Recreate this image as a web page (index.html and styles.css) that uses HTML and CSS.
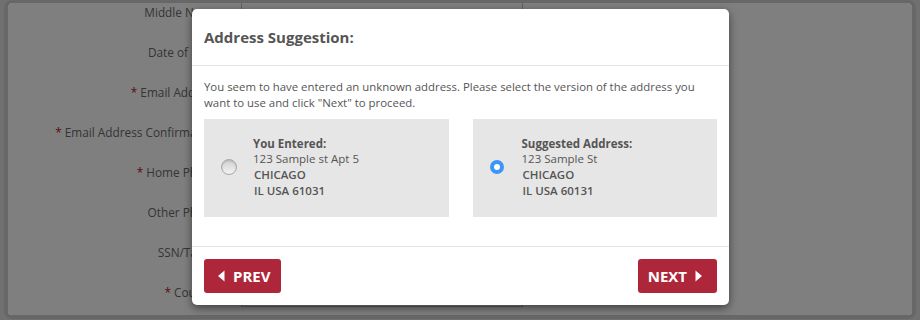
FILE: index.html
```html
<!DOCTYPE html>
<html>
<head>
<meta name="viewport" content="width=device-width, initial-scale=1.0">
  <title>Address Suggestion</title>
  <link rel="stylesheet" href="styles.css">
</head>
<body>
  <div class="frame">
    <form class="bg-form">
      <div class="row"><label class="lbl">Middle Name</label><span class="field"></span></div>
      <div class="row"><label class="lbl">Date of Birth</label><span class="field"></span></div>
      <div class="row"><label class="lbl"><i class="req">*</i> Email Address</label><span class="field"></span></div>
      <div class="row"><label class="lbl"><i class="req">*</i> Email Address Confirmation</label><span class="field"></span></div>
      <div class="row"><label class="lbl"><i class="req">*</i> Home Phone</label><span class="field"></span></div>
      <div class="row"><label class="lbl">Other Phone</label><span class="field"></span></div>
      <div class="row"><label class="lbl">SSN/Tax ID</label><span class="field"></span></div>
      <div class="row"><label class="lbl"><i class="req">*</i> Country</label><span class="field"></span></div>
    </form>
    <div class="overlay"></div>
  </div>

  <div class="modal">
    <div class="modal-header">
      <h4 class="modal-title">Address Suggestion:</h4>
    </div>
    <div class="modal-body">
      <p class="intro">You seem to have entered an unknown address. Please select the version of the address you want to use and click "Next" to proceed.</p>
      <div class="choices">
        <label class="choice">
          <span class="radio-slot"><span class="radio"></span></span>
          <span class="addr">
            <b class="addr-title">You Entered:</b>
            <span class="addr-line">123 Sample st Apt 5</span>
            <span class="addr-line addr-city">CHICAGO</span>
            <span class="addr-line addr-city">IL USA 61031</span>
          </span>
        </label>
        <label class="choice">
          <span class="radio-slot"><span class="radio checked"></span></span>
          <span class="addr">
            <b class="addr-title">Suggested Address:</b>
            <span class="addr-line">123 Sample St</span>
            <span class="addr-line addr-city">CHICAGO</span>
            <span class="addr-line addr-city">IL USA 60131</span>
          </span>
        </label>
      </div>
    </div>
    <div class="modal-footer">
      <button class="btn btn-prev" type="button">
        <svg width="7" height="12" viewBox="0 0 7 12"><path d="M6.5 0.5V11.5L0 6Z" fill="#fff"/></svg>
        PREV
      </button>
      <button class="btn btn-next" type="button">
        NEXT
        <svg width="7" height="12" viewBox="0 0 7 12"><path d="M0.5 0.5V11.5L7 6Z" fill="#fff"/></svg>
      </button>
    </div>
  </div>
</body>
</html>
```

FILE: styles.css
```css
body {
  margin: 0;
  background: #707070;
  font-family: "Open Sans", "Liberation Sans", sans-serif;
}

/* page behind the dialog */
.frame {
  position: relative;
  overflow: hidden;
  box-sizing: border-box;
  height: 319px;
  margin: 0 4px 1px 4px;
  border: 4px solid #676767;
  border-top-width: 3px;
  border-radius: 8px;
  background: #fff;
}
.bg-form {
  margin-top: -11px;
}
.row {
  display: grid;
  grid-template-columns: 221px 282px;
  column-gap: 12px;
  align-items: center;
  height: 40px;
}
.lbl {
  text-align: right;
  padding-right: 11px;
  font-size: 11.8px;
  color: #6a6a6a;
}
.req {
  font-style: normal;
  color: #b01818;
}
.field {
  box-sizing: border-box;
  height: 30px;
  border: 1px solid #c0c0c0;
  background: #fff;
}
.overlay {
  position: absolute;
  top: 0;
  left: 0;
  right: 0;
  bottom: 0;
  background: rgba(0, 0, 0, 0.5);
}

/* dialog */
.modal {
  position: absolute;
  left: 192px;
  top: 9px;
  width: 537px;
  height: 296px;
  box-sizing: border-box;
  display: flex;
  flex-direction: column;
  background: #fff;
  border-radius: 5px;
  box-shadow: 0 3px 9px rgba(0, 0, 0, 0.5);
  color: #555;
}
.modal-header {
  padding: 17px 12px;
  border-bottom: 1px solid #e5e5e5;
}
.modal-title {
  margin: 0;
  font-size: 15px;
  line-height: 22px;
  font-weight: 700;
  color: #555;
}
.modal-body {
  flex: 1;
  padding: 13px 12px 29px;
}
.intro {
  margin: 0 0 8px;
  font-size: 11.4px;
  line-height: 16px;
}
.choices {
  display: grid;
  grid-template-columns: 1fr 1fr;
  column-gap: 24px;
}
.choice {
  display: flex;
  align-items: center;
  gap: 16px;
  height: 98px;
  padding-left: 17px;
  background: #e6e6e6;
}
.radio-slot {
  display: flex;
  width: 16px;
  margin-top: -2px;
}
.radio {
  box-sizing: border-box;
  width: 16px;
  height: 16px;
  border-radius: 50%;
  border: 1px solid #a8a8a8;
  background: linear-gradient(#d0d0d0, #f4f4f4);
  box-shadow: inset 0 1px 2px rgba(0, 0, 0, 0.15);
}
.radio.checked {
  width: 14px;
  height: 14px;
  border: 4px solid #3b96f7;
  background: #fff;
  box-shadow: none;
}
.addr {
  display: flex;
  flex-direction: column;
  font-size: 11.5px;
  line-height: 16px;
  color: #555;
}
.addr-title {
  font-weight: 700;
  line-height: 14px;
}
.addr-city {
  font-weight: 600;
  padding-left: 1px;
}
.modal-footer {
  display: flex;
  justify-content: space-between;
  padding: 12px;
  border-top: 1px solid #e5e5e5;
}
.btn {
  display: flex;
  align-items: center;
  gap: 8px;
  height: 34px;
  border: 0;
  border-radius: 3px;
  background: #ad263a;
  color: #fff;
  font-family: "Open Sans", "Liberation Sans", sans-serif;
  font-size: 15px;
  font-weight: 700;
}
.btn-prev {
  padding: 0 11px 0 14px;
}
.btn-next {
  padding: 0 15px 0 10px;
}
```
